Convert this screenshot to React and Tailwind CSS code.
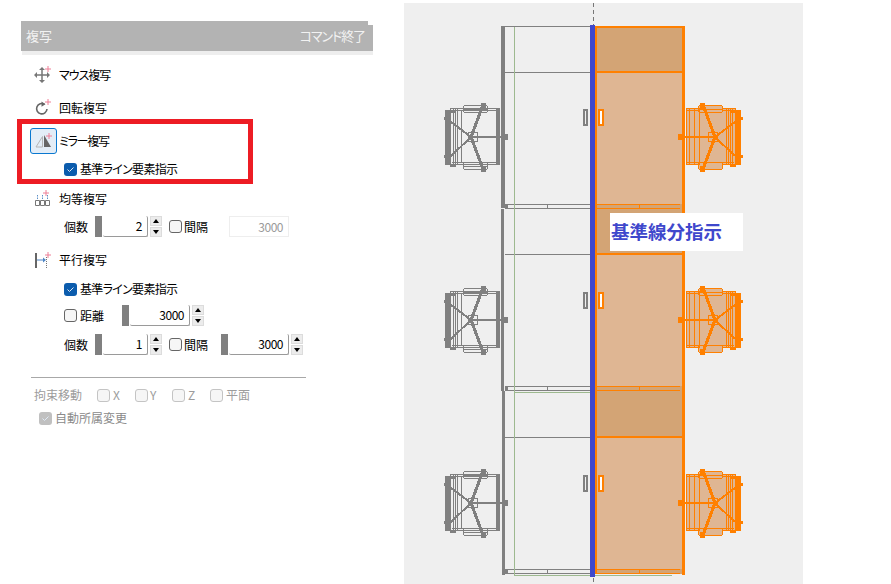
const GREY = '#808080';
const ORANGE = '#ff8000';

function Plus({x = 12, y = 3}) {
  return (
    <path d={`M${x} ${y - 3}v6M${x - 3} ${y}h6`} stroke="#ee7f96" strokeWidth="1" fill="none" />
  );
}

function MoveIcon() {
  return (
    <svg width="18" height="18" viewBox="0 0 18 18" className="shrink-0">
      <path d="M8 3v12M2 9h12" stroke="#777" strokeWidth="1.5" />
      <path d="M8 1l3 3H5zM8 17l3-3H5zM0 9l3-3v6zM16 9l-3-3v6z" fill="#777" />
      <Plus x={14} y={3} />
    </svg>
  );
}

function RotateIcon() {
  return (
    <svg width="18" height="18" viewBox="0 0 18 18" className="shrink-0">
      <path d="M10.5 5.2A5.2 5.2 0 1 0 13 10" stroke="#666" strokeWidth="1.6" fill="none" />
      <path d="M7.5 2.5l4 2.8-4 2.4z" fill="#666" />
      <Plus x={14} y={3} />
    </svg>
  );
}

function MirrorIcon() {
  return (
    <svg width="18" height="16" viewBox="0 0 18 16">
      <path d="M7.5 3.500V14H1z" fill="none" stroke="#b5b5b5" strokeWidth="1" />
      <path d="M9 2v12h7z" fill="#666" />
      <Plus x={14} y={3} />
    </svg>
  );
}

function EvenIcon() {
  return (
    <svg width="18" height="18" viewBox="0 0 18 18" className="shrink-0">
      <path d="M3.500 5v4M8.500 5v4M13.500 5v4" stroke="#5b8fc7" strokeWidth="1" strokeDasharray="1.5 1" />
      <path d="M1.500 10.500h4v5h-4zM6.500 10.500h4v5h-4zM11.500 10.500h4v5h-4z" fill="none" stroke="#777" strokeWidth="1" />
      <Plus x={12} y={3} />
    </svg>
  );
}

function ParallelIcon() {
  return (
    <svg width="18" height="18" viewBox="0 0 18 18" className="shrink-0">
      <path d="M2 2v15" stroke="#666" strokeWidth="2" />
      <path d="M3 9h8" stroke="#4f86c6" strokeWidth="1" />
      <path d="M12 9L9 6.500v5z" fill="#4f86c6" />
      <path d="M12.500 6v11" stroke="#777" strokeWidth="1" strokeDasharray="1 1" />
      <Plus x={14} y={4} />
    </svg>
  );
}

function Checkbox({checked, disabled, className = ''}) {
  if (checked) {
    return (
      <span className={`w-[13px] h-[13px] rounded-[3px] shrink-0 flex items-center justify-center ${disabled ? 'bg-[#c0c0c0]' : 'bg-[#0b5cad]'} ${className}`}>
        <svg width="9" height="9" viewBox="0 0 9 9">
          <path d="M1.500 4.500l2 2 4-4" stroke="#dfe9f5" strokeWidth="1" fill="none" />
        </svg>
      </span>
    );
  }
  return (
    <span className={`w-[13px] h-[13px] rounded-[3px] shrink-0 border bg-[#f6f6f6] ${disabled ? 'border-[#c4c4c4]' : 'border-[#666]'} ${className}`}></span>
  );
}

function Spinner() {
  return (
    <div className="ml-[2px] w-[12px] h-[21px] shrink-0 flex flex-col gap-px bg-white">
      <div className="h-[10px] bg-[#ececec] border border-[#dcdcdc] flex items-center justify-center">
        <span className="w-0 h-0 border-x-[3px] border-x-transparent border-b-[4px] border-b-black"></span>
      </div>
      <div className="h-[10px] bg-[#ececec] border border-[#dcdcdc] flex items-center justify-center">
        <span className="w-0 h-0 border-x-[3px] border-x-transparent border-t-[4px] border-t-black"></span>
      </div>
    </div>
  );
}

function NumberField({value, width}) {
  return (
    <div className="flex shrink-0 h-[21px]">
      <div className="w-[7px] bg-[#808080] mr-px"></div>
      <div className={`${width} bg-white rounded-[2px] border-b border-r border-[#9a9a9a] flex items-center justify-end pr-[5px] text-xs tracking-[-0.5px] text-black`}>
        {value}
      </div>
      <Spinner />
    </div>
  );
}

function IconRow({icon, label, className = '', labelClass = ''}) {
  return (
    <div className={`h-[22px] pl-[34px] flex items-center ${className}`}>
      <span className="w-[25px] shrink-0">{icon}</span>
      <span className={`text-xs text-black ${labelClass}`}>{label}</span>
    </div>
  );
}

function CheckRow({label, className = ''}) {
  return (
    <div className={`h-[20px] flex items-center ${className}`}>
      <Checkbox checked />
      <span className="ml-[3px] text-xs tracking-[-0.7px] text-black">{label}</span>
    </div>
  );
}

function SidePanel() {
  return (
    <div className="w-[404px] shrink-0 pt-[21px]">
      <div className="relative ml-[21px] w-[352px] h-[30px] bg-[#b3b3b3] flex items-center justify-between pl-[5px] pr-[8px] text-[13px] text-[#f2f2f2]">
        <span>複写</span>
        <span className="tracking-[-1.1px]">コマンド終了</span>
        <span className="absolute top-0 right-0 w-[5px] h-[4px] bg-white"></span>
      </div>
      <div className="ml-[22px] w-[351px] h-[4px] bg-[#eeeeee]"></div>

      <IconRow icon={<MoveIcon />} label="マウス複写" className="mt-[9px]" labelClass="tracking-[-1px]" />
      <IconRow icon={<RotateIcon />} label="回転複写" className="mt-[11px]" />

      <div className="ml-[17px] w-[236px] h-[65px] border-[5px] border-[#ed1c24] pt-[4px]">
        <div className="flex items-center ml-[8px]">
          <div className="w-[27px] h-[26px] rounded-[3px] border border-[#0a78d0] bg-[#e3edf7] flex items-center justify-center">
            <MirrorIcon />
          </div>
          <span className="ml-[2px] text-xs tracking-[-1.3px] text-black">ミラー複写</span>
        </div>
        <CheckRow label="基準ライン要素指示" className="mt-[5px] ml-[42px]" />
      </div>

      <IconRow icon={<EvenIcon />} label="均等複写" className="mt-[4px]" />
      <div className="mt-[6px] pl-[64px] h-[21px] flex items-center text-xs text-black">
        <span className="w-[31px] shrink-0">個数</span>
        <NumberField value="2" width="w-[45px]" />
        <Checkbox className="ml-[7px]" />
        <span className="ml-[2px] w-[45px] shrink-0">間隔</span>
        <div className="w-[60px] h-[21px] border border-[#eeeeee] flex items-center justify-end pr-[5px] tracking-[-0.5px] text-[#9a9a9a]">3000</div>
      </div>

      <IconRow icon={<ParallelIcon />} label="平行複写" className="mt-[12px]" />
      <CheckRow label="基準ライン要素指示" className="mt-[8px] ml-[64px]" />
      <div className="mt-[6px] pl-[64px] h-[21px] flex items-center text-xs text-black">
        <Checkbox />
        <span className="ml-[3px] w-[42px] shrink-0">距離</span>
        <NumberField value="3000" width="w-[60px]" />
      </div>
      <div className="mt-[8px] pl-[64px] h-[21px] flex items-center text-xs text-black">
        <span className="w-[31px] shrink-0">個数</span>
        <NumberField value="1" width="w-[45px]" />
        <Checkbox className="ml-[7px]" />
        <span className="ml-[2px] w-[37px] shrink-0">間隔</span>
        <NumberField value="3000" width="w-[60px]" />
      </div>

      <div className="mt-[22px] ml-[31px] w-[275px] h-px bg-[#a8a8a8]"></div>

      <div className="mt-[7px] pl-[34px] h-[20px] flex items-center text-xs text-[#9c9c9c]">
        <span className="w-[63px] shrink-0">拘束移動</span>
        <Checkbox disabled />
        <span className="ml-[3px] w-[22px] shrink-0">X</span>
        <Checkbox disabled />
        <span className="ml-[2px] w-[22px] shrink-0">Y</span>
        <Checkbox disabled />
        <span className="ml-[3px] w-[22px] shrink-0">Z</span>
        <Checkbox disabled />
        <span className="ml-[3px]">平面</span>
      </div>
      <div className="mt-[3px] pl-[39px] h-[20px] flex items-center text-xs text-[#8a8a8a]">
        <Checkbox checked disabled />
        <span className="ml-[3px]">自動所属変更</span>
      </div>
    </div>
  );
}

// equipment seen from above, orange copy is mirrored about the base line
function Machine({color, y, mirror, fill}) {
  const transform = mirror ? `translate(1186 ${y}) scale(-1 1)` : `translate(0 ${y})`;
  return (
    <g transform={transform} stroke={color} fill="none" strokeWidth="1">
      <rect x="450.500" y="108.500" width="49" height="56" fill={fill} />
      <path d="M452 110.500h47M452 162.500h47" />
      <rect x="463.500" y="105.500" width="24" height="7" rx="2" fill={fill} />
      <path d="M464 109h23M464 166h23" />
      <rect x="463.500" y="162.500" width="24" height="7" rx="2" fill={fill} />
      {mirror ? (
        <g>
          <path d="M445 110h6v55h-6z" fill={color} stroke="none" />
          <path d="M453.500 108v57M455.500 108v57M457.500 108v57M459.500 108v57M486.500 108v57M491.500 108v57M496.500 108v57" />
          <path d="M443.500 118.500h2M443.500 156.500h2" strokeWidth="3" />
        </g>
      ) : (
        <g>
          <path d="M445 110h6v55h-6z" fill={color} stroke="none" />
          <path d="M453.500 108v57M455.500 108v57M457.500 108v57M461.500 110v53" />
          <path d="M496 109h4v56h-4z" fill={color} stroke="none" />
          <path d="M443.500 118.500h2M443.500 156.500h2" strokeWidth="3" />
        </g>
      )}
      <path d="M450 111h6M450 165h6" strokeWidth="3" />
      <rect x="468.500" y="132.500" width="9" height="9" />
      <path d="M471 137l12-32M471 137l12 32" strokeWidth="3" />
      <path d="M471 137l-20-15M471 137l-20 19" strokeWidth="2" />
      <path d="M471 137h34" strokeWidth="2" />
      <rect x="504" y="134" width="4" height="6" fill={color} stroke="none" />
      <rect x="481" y="103" width="5" height="6" fill={color} stroke="none" />
      <rect x="481" y="166" width="5" height="6" fill={color} stroke="none" />
    </g>
  );
}

function Unit({y, top, upper, lower, band, handle}) {
  return (
    <g>
      <rect x="595" y={top} width="89" height={upper - top} fill="#d3a475" />
      <rect x="595" y={upper} width="89" height={band - upper} fill="#dfb693" />
      <rect x="595" y={band} width="89" height={lower - band} fill="#d3a475" />
      <path d={`M505 ${upper + 0.5}H590`} stroke={GREY} strokeWidth="1" />
      <path d={`M596 ${upper}H683`} stroke={ORANGE} strokeWidth="1.500" />
      <path d={`M505 ${band + 0.5}H590M505 ${lower - 0.5}H590M${547.5} ${band}V${lower}`} stroke={GREY} strokeWidth="1" fill="none" />
      <rect x="505" y={band} width="3" height={lower - band} fill={GREY} />
      <path d={`M596 ${band + 0.5}H680M596 ${lower - 0.5}H680M639.500 ${band}V${lower}`} stroke={ORANGE} strokeWidth="1" fill="none" />
      <rect x="584" y={handle + 1} width="3" height="15" fill="none" stroke={GREY} strokeWidth="2" />
      <rect x="599" y={handle + 1} width="4" height="15" fill="#ffffff" stroke={ORANGE} strokeWidth="2" />
      <Machine color={GREY} y={y} />
      <Machine color={ORANGE} y={y} mirror fill="#dfb693" />
    </g>
  );
}

function Canvas() {
  return (
    <div className="relative mt-[3px] w-[399px] h-[581px] bg-[#efefef] shrink-0">
      <svg width="399" height="581" viewBox="404 3 399 581" className="block" shapeRendering="crispEdges">
        <Unit y={0} top={27} upper={72} band={204} lower={209} handle={109} />
        <Unit y={183} top={209} upper={254} band={386} lower={391} handle={292} />
        <Unit y={366} top={391} upper={437} band={569} lower={574} handle={475} />

        <path d="M514.500 26V575H672M514 392.500H590" stroke="#9db98f" strokeWidth="1" fill="none" />
        <path d="M505 26.500H590" stroke={GREY} strokeWidth="1" />
        <rect x="501" y="26" width="4" height="182" fill={GREY} />
        <rect x="501" y="209" width="3" height="182" fill={GREY} />
        <rect x="502" y="391" width="3" height="184" fill={GREY} />

        <path d="M595 27H685" stroke={ORANGE} strokeWidth="2" />
        <rect x="595" y="26" width="2" height="548" fill={ORANGE} />
        <rect x="682" y="26" width="3" height="549" fill={ORANGE} />

        <path d="M593.500 3V25M593.500 578V584" stroke="#777" strokeWidth="1" strokeDasharray="4 3" />
        <rect x="590" y="25" width="5" height="552" fill="#3f48cc" />
      </svg>
      <div className="absolute left-[206px] top-[210px] w-[133px] h-[38px] bg-white flex items-center pl-[1px] text-[18.5px] font-bold text-[#3f48cc]">
        基準線分指示
      </div>
    </div>
  );
}

export default function App() {
  return (
    <div className="w-[891px] h-[584px] bg-white flex overflow-hidden font-['Noto_Sans_CJK_JP','Noto_Sans',sans-serif] [font-feature-settings:'palt']">
      <SidePanel />
      <Canvas />
    </div>
  );
}
